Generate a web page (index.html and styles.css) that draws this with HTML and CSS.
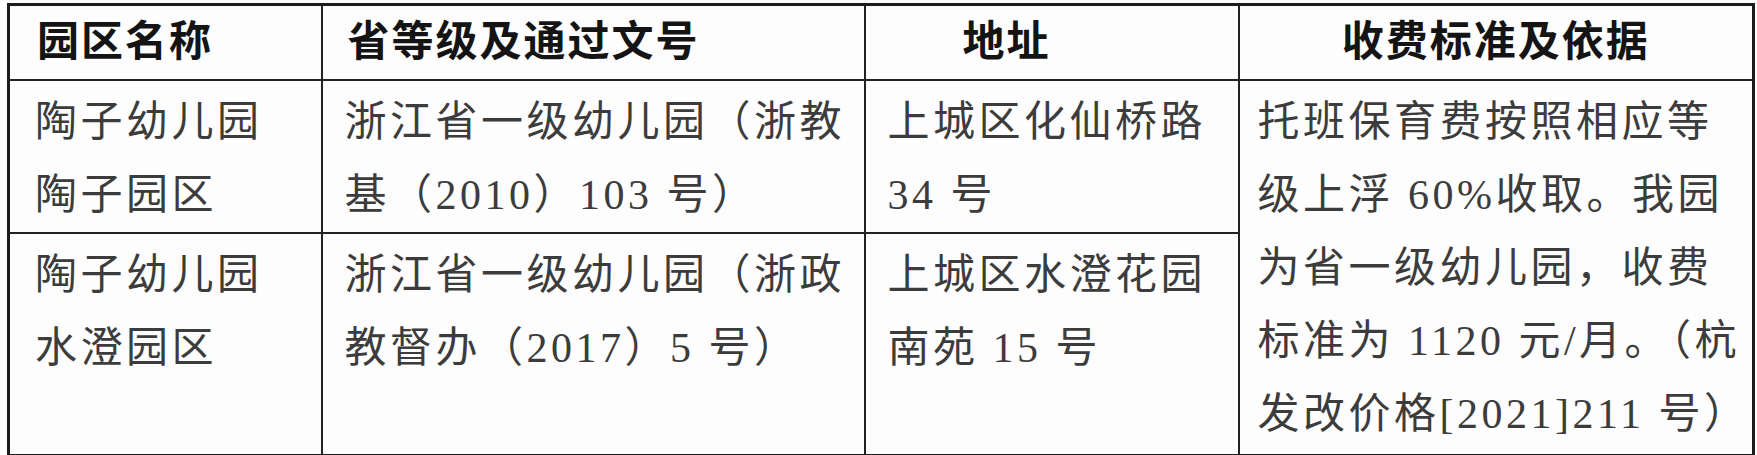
FILE: index.html
```html
<!DOCTYPE html>
<html lang="zh-CN">
<head>
<meta charset="utf-8">
<title>园区收费</title>
<link rel="stylesheet" href="styles.css">
</head>
<body>
<table class="fee-table">
  <colgroup>
    <col class="c1"><col class="c2"><col class="c3"><col class="c4">
  </colgroup>
  <thead>
    <tr class="head-row">
      <th class="left">园区名称</th>
      <th class="left">省等级及通过文号</th>
      <th class="addr">地址</th>
      <th>收费标准及依据</th>
    </tr>
  </thead>
  <tbody>
    <tr class="row1">
      <td>陶子幼儿园<br>陶子园区</td>
      <td>浙江省一级幼儿园（浙教<br>基（2010）103 号）</td>
      <td>上城区化仙桥路<br>34 号</td>
      <td rowspan="2" class="fee">托班保育费按照相应等<br>级上浮 60%收取。我园<br>为省一级幼儿园，收费<br>标准为 1120 元/月。（杭<br>发改价格[2021]211 号）</td>
    </tr>
    <tr class="row2">
      <td>陶子幼儿园<br>水澄园区</td>
      <td>浙江省一级幼儿园（浙政<br>教督办（2017）5 号）</td>
      <td>上城区水澄花园<br>南苑 15 号</td>
    </tr>
  </tbody>
</table>
</body>
</html>
```

FILE: styles.css
```css
html, body {
  background: #fdfdfd;
}
body {
  margin: 3px 0 0 7px;
  font-family: "Liberation Serif", "Noto Sans CJK SC", serif;
}
.fee-table {
  border-collapse: collapse;
  table-layout: fixed;
  width: 1745px;
  border: 3px solid #1c1c1c;
}
.c1 { width: 313px; }
.c2 { width: 543px; }
.c3 { width: 374px; }
.c4 { width: 515px; }

.fee-table th,
.fee-table td {
  border: 2px solid #222;
  white-space: nowrap;
  overflow: hidden;
}
.fee-table th {
  height: 73px;
  padding: 0;
  font-size: 42px;
  font-weight: 700;
  color: #141414;
  letter-spacing: 2px;
  text-align: center;
  vertical-align: middle;
  line-height: 73px;
}
.fee-table th.left {
  text-align: left;
  padding-left: 25px;
}
.fee-table th:first-child {
  padding-left: 27px;
}
.fee-table th.addr {
  padding-right: 90px;
}
.fee-table td {
  vertical-align: top;
  padding: 5px 0 0 22px;
  font-size: 42px;
  font-weight: 400;
  line-height: 73px;
  letter-spacing: 3.5px;
  color: #3c3c3c;
}
.fee-table td:first-child {
  padding-left: 25px;
}
.fee-table td.fee {
  padding-left: 18px;
}
.row1 td { height: 141px; }
.row2 td { height: 215px; }
```
